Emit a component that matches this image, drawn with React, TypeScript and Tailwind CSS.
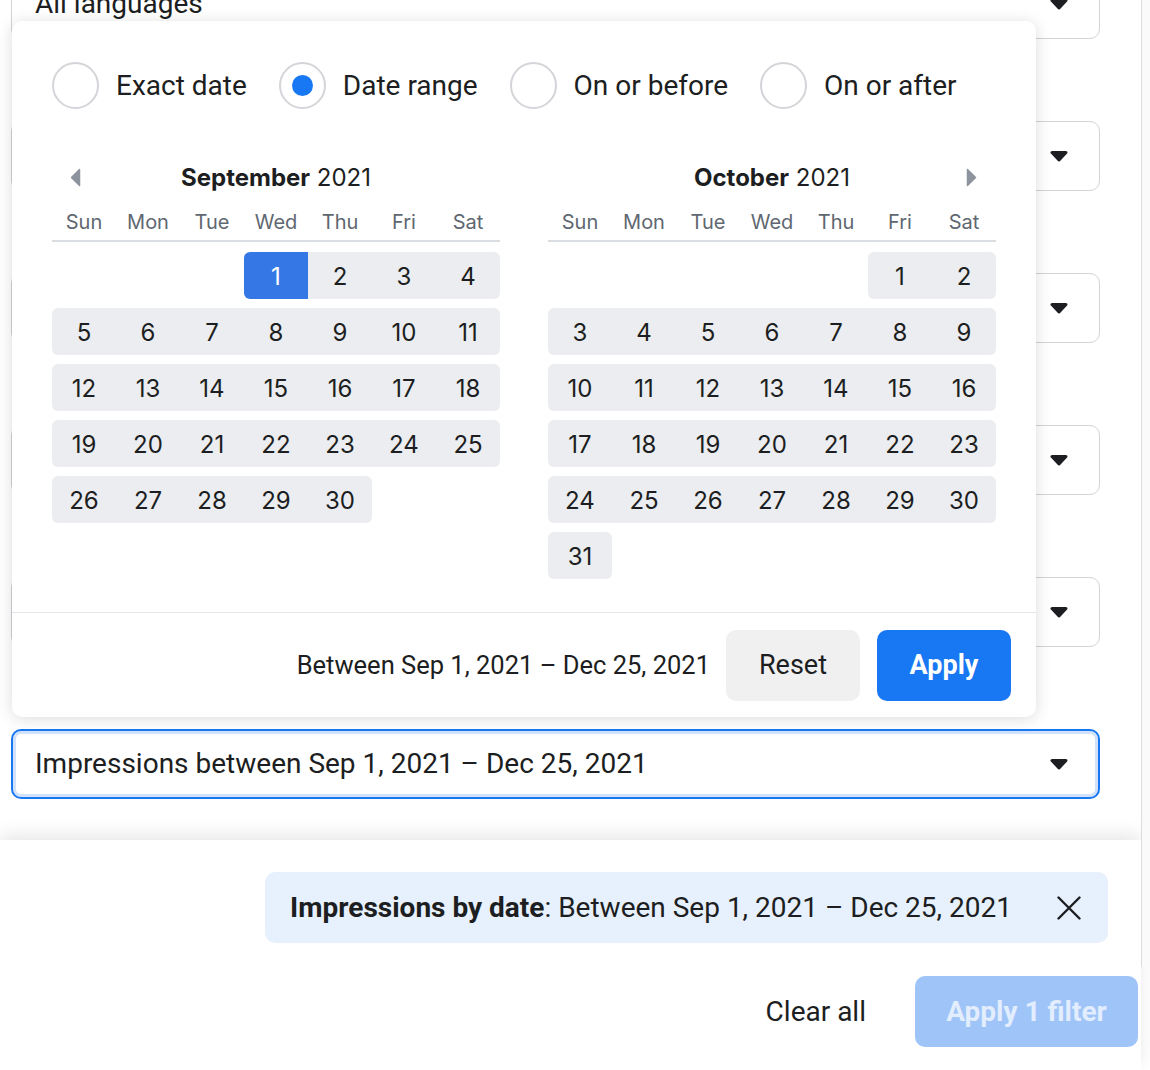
import React from "react";

const roboto = { fontFamily: "Roboto, 'Liberation Sans', sans-serif" };

const Caret = () => (
  <svg width="20" height="12" viewBox="0 0 20 12" className="shrink-0">
    <path d="M3 2.5 H17 L10 10 Z" fill="#1c1e21" stroke="#1c1e21" strokeWidth="3" strokeLinejoin="round" />
  </svg>
);

const Radio = ({ label, checked }: { label: string; checked?: boolean }) => (
  <div className="flex items-center gap-[17px]">
    <div className="w-[47px] h-[47px] rounded-full border-2 border-[#d3d5d9] flex items-center justify-center">
      {checked && <div className="w-[21px] h-[21px] rounded-full bg-[#1877f2]" />}
    </div>
    <span className="text-[28px] text-[#1c1e21]">{label}</span>
  </div>
);

const dayNames = ["Sun", "Mon", "Tue", "Wed", "Thu", "Fri", "Sat"];

function weeks(startDow: number, days: number) {
  const cells: (number | null)[] = [];
  for (let i = 0; i < startDow; i++) cells.push(null);
  for (let d = 1; d <= days; d++) cells.push(d);
  while (cells.length % 7) cells.push(null);
  const rows: (number | null)[][] = [];
  for (let i = 0; i < cells.length; i += 7) rows.push(cells.slice(i, i + 7));
  return rows;
}

const Month = ({
  name,
  startDow,
  days,
  prev,
  next,
  selected,
}: {
  name: string;
  startDow: number;
  days: number;
  prev?: boolean;
  next?: boolean;
  selected?: number;
}) => {
  const rows = weeks(startDow, days);
  return (
    <div className="w-[448px]" style={{ fontFamily: "Inter, 'Liberation Sans', sans-serif" }}>
      <div className="grid grid-cols-[1fr_auto_1fr] items-center h-[32px]">
        <div className="flex pl-[18px]">
          {prev && (
            <svg width="11" height="19" viewBox="0 0 11 19">
              <path d="M9.5 1.5 V17.5 L1.5 9.5 Z" fill="#8d949e" stroke="#8d949e" strokeWidth="1.5" strokeLinejoin="round" />
            </svg>
          )}
        </div>
        <div className="text-[24px] text-[#1c1e21] leading-[32px] pt-[2px]">
          <span className="font-bold">{name}</span> 2021
        </div>
        <div className="flex justify-end pr-[19px]">
          {next && (
            <svg width="11" height="19" viewBox="0 0 11 19">
              <path d="M1.5 1.5 V17.5 L9.5 9.5 Z" fill="#8d949e" stroke="#8d949e" strokeWidth="1.5" strokeLinejoin="round" />
            </svg>
          )}
        </div>
      </div>
      <div className="flex mt-[16px] pb-[4px] border-b-2 border-[#dadde1]">
        {dayNames.map((d) => (
          <div key={d} className="w-[64px] text-center text-[20px] leading-[28px] text-[#606770]">
            {d}
          </div>
        ))}
      </div>
      <div className="flex flex-col gap-[9px] mt-[10px]">
        {rows.map((row, ri) => {
          const filled = row.map((c, i) => (c !== null ? i : -1)).filter((i) => i >= 0);
          const first = filled[0];
          const last = filled[filled.length - 1];
          return (
            <div key={ri} className="flex h-[47px]">
              {row.map((c, i) => {
                if (c === null) return <div key={i} className="w-[64px]" />;
                const isSel = c === selected;
                const round =
                  i === first && i === last
                    ? "rounded-[6px]"
                    : i === first
                    ? "rounded-l-[6px]"
                    : i === last
                    ? "rounded-r-[6px]"
                    : "";
                return (
                  <div
                    key={i}
                    className={`w-[64px] flex items-center justify-center text-[24px] pt-[2px] ${round} ${
                      isSel ? "bg-[#3578e5] text-white" : "bg-[#ebedf0] text-[#1c1e21]"
                    }`}
                  >
                    {c}
                  </div>
                );
              })}
            </div>
          );
        })}
      </div>
    </div>
  );
};

const Select = ({ text, focused }: { text?: string; focused?: boolean }) => (
  <div
    className={
      focused
        ? "w-[1089px] h-[70px] rounded-[10px] border-2 border-[#1877f2] shadow-[inset_0_0_0_3px_#d2e2fb] bg-white flex items-center pl-[22px] pr-[29px]"
        : "w-[1089px] h-[70px] rounded-[10px] border border-[#d0d3d7] bg-white flex items-center pl-[23px] pr-[30px]"
    }
  >
    <span className="text-[28px] text-[#1c1e21] whitespace-nowrap">{text}</span>
    <div className="ml-auto">
      <Caret />
    </div>
  </div>
);

export default function App() {
  return (
    <div className="w-[1150px] h-[1070px] bg-white flex overflow-hidden" style={roboto}>
      <div className="w-[1141px] flex flex-col">
        <div className="relative h-[840px] overflow-hidden">
          <div className="flex flex-col gap-[82px] mt-[-31px] pl-[11px]">
            <Select text="All languages" />
            <Select />
            <Select />
            <Select />
            <Select />
            <Select text="Impressions between Sep 1, 2021 – Dec 25, 2021" focused />
          </div>

          {/* date popover */}
          <div className="absolute left-[12px] top-[21px] w-[1024px] bg-white rounded-[10px] shadow-[0_2px_16px_rgba(0,0,0,0.14)] flex flex-col">
            <div className="flex items-center gap-[32px] pt-[41px] pl-[40px]">
              <Radio label="Exact date" />
              <Radio label="Date range" checked />
              <Radio label="On or before" />
              <Radio label="On or after" />
            </div>
            <div className="flex items-start gap-[48px] px-[40px] mt-[51px] pb-[33px]">
              <Month name="September" startDow={3} days={30} prev selected={1} />
              <Month name="October" startDow={5} days={31} next />
            </div>
            <div className="border-t border-[#e4e6eb] h-[105px] flex items-center justify-end pr-[25px]">
              <span className="text-[25.5px] text-[#1c1e21] mr-[16px]">Between Sep 1, 2021 – Dec 25, 2021</span>
              <button className="w-[134px] h-[71px] rounded-[10px] bg-[#f0f0f0] text-[27px] text-[#1c1e21]">
                Reset
              </button>
              <button className="w-[134px] h-[71px] rounded-[10px] bg-[#1877f2] text-[27px] font-bold text-white ml-[17px]">
                Apply
              </button>
            </div>
          </div>
        </div>

        <div className="relative z-10 flex-1 bg-white shadow-[0_-6px_16px_rgba(0,0,0,0.09)] flex flex-col pt-[32px]">
          <div className="self-end mr-[33px] h-[71px] rounded-[10px] bg-[#e7f0fd] flex items-center pl-[25px] pr-[27px] gap-[45px]">
            <span className="text-[28px] text-[#1c1e21] whitespace-nowrap">
              <span className="font-bold">Impressions by date</span>: Between Sep 1, 2021 – Dec 25, 2021
            </span>
            <svg width="24" height="24" viewBox="0 0 24 24">
              <path d="M1.5 1.5 L22.5 22.5 M22.5 1.5 L1.5 22.5" stroke="#1c1e21" strokeWidth="2.4" strokeLinecap="round" />
            </svg>
          </div>
          <div className="flex justify-end items-center gap-[49px] mr-[3px] mt-[33px]">
            <span className="text-[28px] text-[#1c1e21]">Clear all</span>
            <button className="w-[223px] h-[71px] rounded-[10px] bg-[#9fc4f8] text-[28px] font-bold text-[#e2edfd]">
              Apply 1 filter
            </button>
          </div>
        </div>
      </div>
      <div className="w-[9px] h-[967px] border-l border-[#dcdcdc] bg-[#fafafa] relative z-20" />
    </div>
  );
}
